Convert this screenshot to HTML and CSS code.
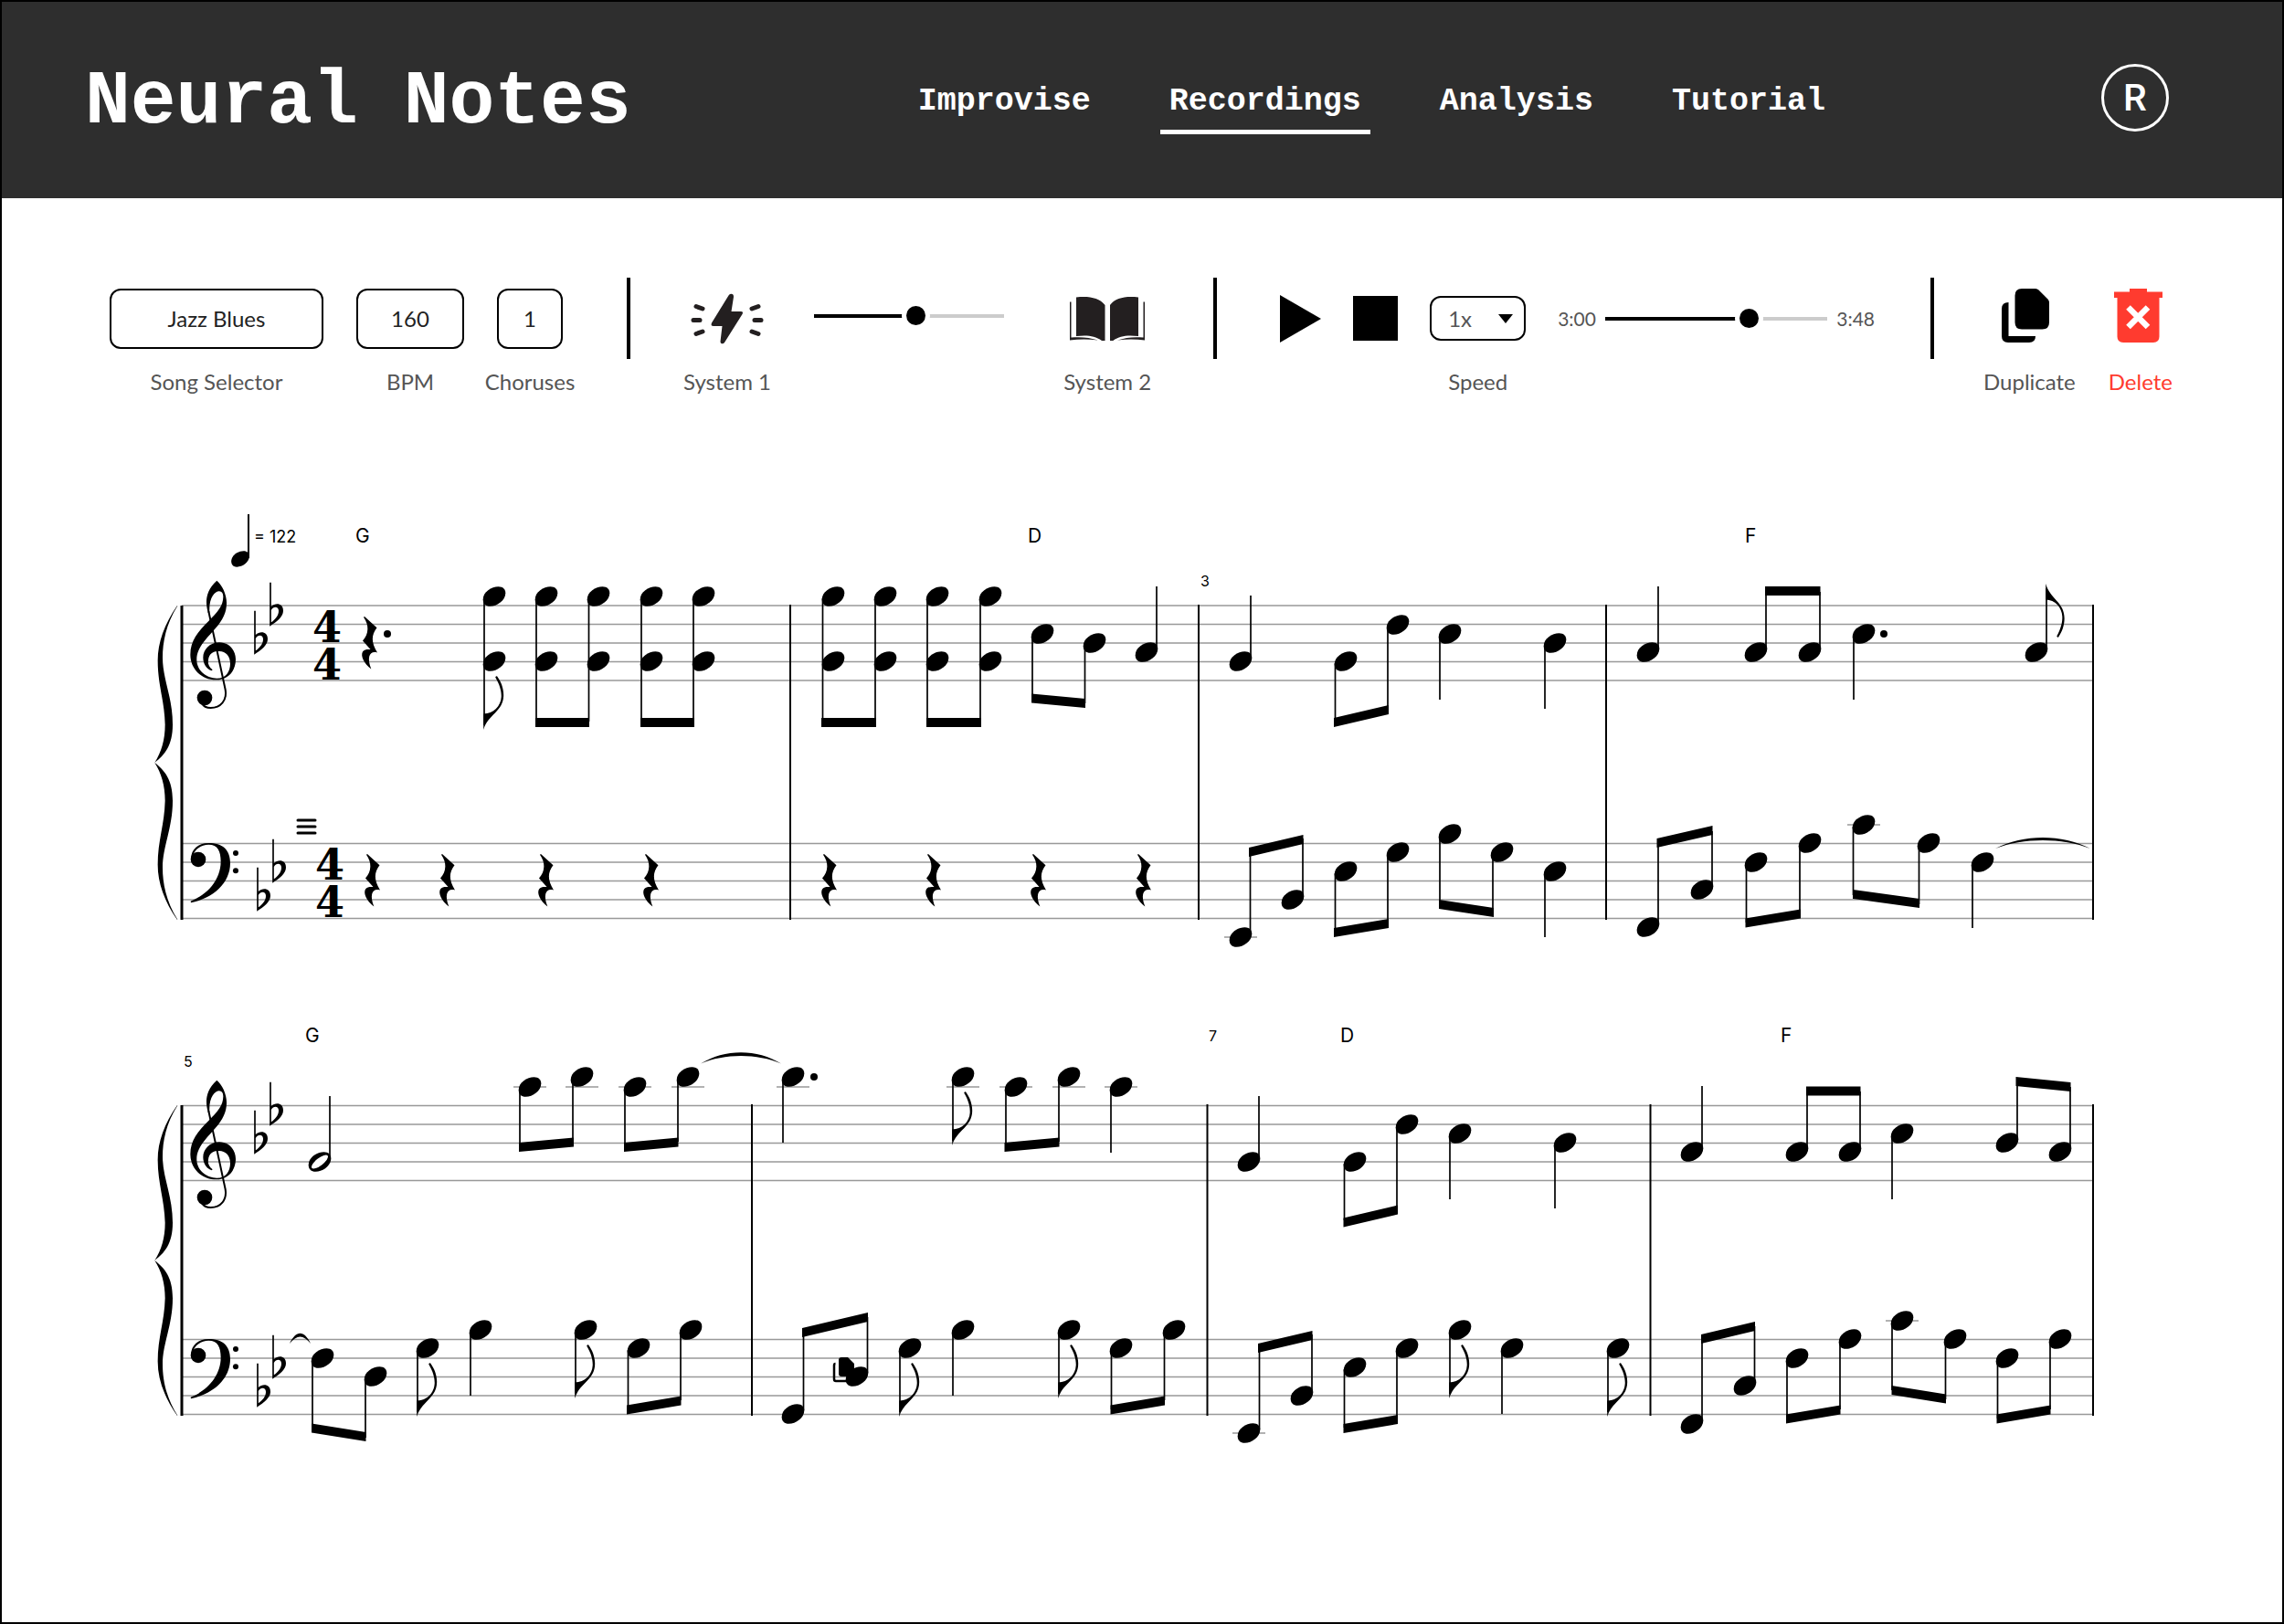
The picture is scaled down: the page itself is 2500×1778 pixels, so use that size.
FILE: index.html
```html
<!DOCTYPE html>
<html lang="en">
<head>
<meta charset="utf-8">
<meta name="viewport" content="width=device-width, initial-scale=1">
<title>Neural Notes</title>
<link rel="stylesheet" href="styles.css">
</head>
<body>
<div class="app">
  <header class="header">
    <h1 class="brand">Neural Notes</h1>
    <nav class="nav">
      <a class="nav-link" href="#improvise">Improvise</a>
      <a class="nav-link is-active" href="#recordings" aria-current="page">Recordings</a>
      <a class="nav-link" href="#analysis">Analysis</a>
      <a class="nav-link" href="#tutorial">Tutorial</a>
    </nav>
    <button class="avatar" type="button">R</button>
  </header>

  <main>
    <div class="toolbar">
      <div class="group group-song">
        <div class="item">
          <div class="control"><select class="box box-song" id="song"><option>Jazz Blues</option></select></div>
          <label class="label" for="song">Song Selector</label>
        </div>
        <div class="item">
          <div class="control"><input class="box box-bpm" id="bpm" type="text" value="160"></div>
          <label class="label" for="bpm">BPM</label>
        </div>
        <div class="item item-choruses">
          <div class="control"><input class="box box-choruses" id="choruses" type="text" value="1"></div>
          <label class="label" for="choruses">Choruses</label>
        </div>
      </div>

      <div class="divider"></div>

      <div class="group group-system">
        <button class="item" type="button">
          <span class="control">
            <svg width="80" height="56" viewBox="0 0 80 56" aria-hidden="true">
              <path d="M43 1q4-1 4 3L44.500 20H55q3 0 1.500 3L37 54q-1.500 2-3.500 1-1-.5-1-2L34.500 36H25q-3.500 0-2-3.500L41.500 2.500Q42 1.500 43 1Z" fill="#231f20"/>
              <path d="M6 14.500l7 2.500M3 29.500h7M6 44.500l7-2.500M74 14.500L67 17M77 29.500h-7M74 44.500L67 42" stroke="#231f20" stroke-width="5" stroke-linecap="round"/>
            </svg>
          </span>
          <span class="label">System 1</span>
        </button>
        <div class="control control-slider mix">
          <input class="slider" type="range" value="54" style="--value: 54%" aria-label="System balance">
        </div>
        <button class="item" type="button">
          <span class="control">
            <svg width="82" height="48" viewBox="0 0 82 48" aria-hidden="true">
              <path d="M7 .500C21-1 32 1 38.500 9v42.500C30 43 20 42 7 43.500ZM75 .500C61-1 50 1 44 9v42.500C52 43 62 42 75 43.500Z" fill="#231f20" transform="scale(1 .99)"/>
              <path d="M0 5.500h1.500V44.500C12 43.500 22 44.500 31 47.500 21 46 10 46 0 47.500ZM82 5.500h-1.500V44.500C70 43.500 61 44.500 52 47.500 62 46 72 46 82 47.500Z" fill="#231f20"/>
            </svg>
          </span>
          <span class="label">System 2</span>
        </button>
      </div>

      <div class="divider"></div>

      <div class="group group-player">
        <button class="control" type="button" aria-label="Play">
          <svg width="45" height="52" viewBox="0 0 45 52" aria-hidden="true"><path d="M0 0l45 26L0 52Z"/></svg>
        </button>
        <button class="control" type="button" aria-label="Stop">
          <svg width="49" height="49" viewBox="0 0 49 49" aria-hidden="true"><path d="M0 0h49v49H0Z"/></svg>
        </button>
        <div class="item">
          <div class="control speed">
            <select class="box box-speed" id="speed"><option>1x</option></select>
            <svg class="speed-arrow" width="16" height="10" viewBox="0 0 16 10" aria-hidden="true"><path d="M0 0h16L8 10Z"/></svg>
          </div>
          <label class="label" for="speed">Speed</label>
        </div>
        <div class="control control-slider progress">
          <span class="time">3:00</span>
          <input class="slider" type="range" value="66" style="--value: 66%" aria-label="Playback position">
          <span class="time">3:48</span>
        </div>
      </div>

      <div class="divider"></div>

      <div class="group group-actions">
        <button class="item" type="button">
          <span class="control">
            <svg width="60" height="59" viewBox="0 0 60 59" aria-hidden="true">
              <path d="M22 0H37q2 0 3.500 1.500L50.500 11.500Q52 13 52 15V37q0 7.500-7.500 7.500H22q-7.500 0-7.500-7.500V7.500Q14.500 0 22 0ZM7.500 15V52H37q0 7-7 7H7q-7 0-7-7V22q0-7 7.500-7Z"/>
            </svg>
          </span>
          <span class="label">Duplicate</span>
        </button>
        <button class="item item-danger" type="button">
          <span class="control">
            <svg width="58" height="59" viewBox="0 0 58 59" aria-hidden="true">
              <path d="M17 0H36V3.500H53V10H49.500V52.500q0 6.500-6.500 6.500H10q-6.500 0-6.500-6.500V10H0V3.500H17Z" fill="#ff3b2f"/>
              <path d="M15.500 20.500L37 42M37 20.500L15.500 42" stroke="#fff" stroke-width="6.500"/>
            </svg>
          </span>
          <span class="label">Delete</span>
        </button>
      </div>
    </div>

    <svg class="score" viewBox="0 500 2500 1120" role="img" aria-label="Sheet music, measures 1 to 8">
      <defs>
        <path id="head" d="M-12.300 3.200C-12.300-5-3-10.800 4.500-10.800 9.500-10.800 12.300-8 12.300-3.700 12.300 4.500 3 10.800-4.500 10.800-9.500 10.800-12.300 7.800-12.300 3.200Z"/>
        <path id="flag" d="M0 0C5-17 22-20 22-38 22-46 19-53 15-58.500Q14-59.500 13-57.500C18-49 19.800-42 19.500-36 19-26 11-17.500 0-17.500Z"/>
        <g id="down"><use href="#head"/><path class="stem" d="M-11 2V72"/></g>
        <g id="up"><use href="#head"/><path class="stem" d="M11-2V-72"/></g>
        <g id="down8"><use href="#head"/><path class="stem" d="M-11 2V70"/><use href="#flag" x="-11.800" y="75"/></g>
        <g id="up8"><use href="#head"/><path class="stem" d="M11-2V-70"/><use href="#flag" transform="translate(10.200 -75) scale(.93 -1)"/></g>
        <path id="rest" d="M3 0L16.500 12.300C10.500 20 10 28 17 39.500 9 37 5 44 10.300 57.500 2 51-1.500 43 1 38.500 3 35.500 7 35.800 9.500 36L1 26.500C8 19 8 9 2 .800Z"/>
        <g id="flat" transform="scale(.3333)"><path d="M-2.500 0Q0-3 2.500 0V78C18 64 42 68 42 92 42 112 20 128-2.500 143ZM2.500 90V130C16 120 27 108 27 92 27 78 10 76 2.500 90Z"/></g>
        <g id="treble" transform="scale(.3333)">
          <path d="M232 47C250 62 266 95 264 125 262 175 225 205 200 235 172 268 165 288 166 310 168 345 200 368 232 368 262 368 276 345 276 320 276 295 262 280 240 279 222 278 206 285 204 308 202 318 205 330 218 340L215 343C198 337 187 320 187 300 187 275 208 250 240 250 270 250 293 272 294 305 294 345 268 373 230 373 180 373 145 335 145 290 145 245 170 215 205 180 235 150 253 130 253 100 253 88 248 82 240 82 225 82 205 105 208 152L203 152C196 125 190 85 232 47Z"/>
          <path d="M205 148L260 405C266 440 245 465 212 465 198 465 188 460 183 450" fill="none" stroke="#000" stroke-width="6"/>
          <circle cx="192" cy="432" r="25"/>
        </g>
        <g id="bass" transform="scale(.3333)">
          <path d="M147 960C148 930 170 909 205 909 250 909 276 930 276 975 276 1040 220 1090 147 1105L146 1100C200 1080 245 1030 245 970 245 935 235 914 205 914 180 914 160 930 155 948Z"/>
          <circle cx="171" cy="963" r="25"/><circle cx="294" cy="942" r="9"/><circle cx="294" cy="1000" r="9"/>
        </g>
        <g id="half-brace"><path d="M102 129C60 190 38 250 38 310 38 390 60 440 62 520 62 570 50 610 28 645 60 620 87 590 87 520 87 430 54 370 54 300 54 250 65 190 103 130Z"/></g>
        <g id="brace"><use href="#half-brace"/><use href="#half-brace" transform="matrix(1 0 0 -1 0 1290)"/></g>
        <g id="staff"><path class="line" d="M199 0H2291M199 20.500H2291M199 41H2291M199 61.500H2291M199 82H2291"/></g>
        <path id="ledger" class="line" d="M-18 0H18"/>
        <circle id="dot" r="4"/>
      </defs>

      <!-- First system -->
      <use href="#staff" y="663"/>
      <use href="#staff" y="923.500"/>
      <path class="bar bar-first" d="M199 663V1007"/>
      <path class="bar" d="M865 662V1007M1312 662V1007M1758 662V1007M2291 662V1007"/>
      <use href="#brace" transform="translate(160 620) scale(.3333)"/>
      <use href="#treble" x="160" y="620"/>
      <use href="#bass" x="160" y="620"/>
      <use href="#flat" x="279" y="669"/><use href="#flat" x="296" y="638"/>
      <use href="#flat" x="282" y="950"/><use href="#flat" x="299" y="919"/>
      <g class="meter">
        <text x="358" y="703">4</text><text x="358" y="744">4</text>
        <text x="361" y="963">4</text><text x="361" y="1004">4</text>
      </g>
      <use href="#head" transform="translate(263 612) scale(.8)"/>
      <path class="tempo-stem" d="M272 563V611"/>
      <text class="tempo" x="278" y="594">= 122</text>
      <text class="chord" x="389" y="594">G</text>
      <text class="chord" x="1125" y="594">D</text>
      <text class="chord" x="1910" y="594">F</text>
      <text class="count" x="1314" y="642">3</text>
      <path class="tacet" d="M326 898H345M326 905H345M326 912H345"/>

      <!-- Measure 1 -->
      <use href="#rest" x="396" y="675"/><use href="#dot" x="424" y="694"/>
      <use href="#head" x="541" y="653"/><use href="#head" x="598" y="653"/><use href="#head" x="655" y="653"/><use href="#head" x="713" y="653"/><use href="#head" x="770" y="653"/>
      <use href="#down8" x="541" y="724"/><use href="#head" x="598" y="724"/><use href="#head" x="655" y="724"/><use href="#head" x="713" y="724"/><use href="#head" x="770" y="724"/>
      <path class="stem" d="M530 655V730M587 655V790M644.500 655V790M702 655V790M759 655V790"/>
      <path d="M586 786H645v10H586ZM701 786H760v10H701Z"/>
      <use href="#rest" x="399" y="935"/><use href="#rest" x="481" y="935"/><use href="#rest" x="589" y="935"/><use href="#rest" x="704" y="935"/>

      <!-- Measure 2 -->
      <use href="#head" x="912" y="653"/><use href="#head" x="969" y="653"/><use href="#head" x="1026" y="653"/><use href="#head" x="1084" y="653"/>
      <use href="#head" x="912" y="724"/><use href="#head" x="969" y="724"/><use href="#head" x="1026" y="724"/><use href="#head" x="1084" y="724"/>
      <use href="#head" x="1141" y="694"/><use href="#head" x="1198" y="704"/><use href="#up" x="1255" y="714"/>
      <path class="stem" d="M900.500 655V790M958 655V790M1015 655V790M1073 655V790M1130 696V765M1187.500 706V770"/>
      <path d="M899 786H959v10H899ZM1014 786H1074v10H1014ZM1129 759.500L1188 765v10L1129 769.500Z"/>
      <use href="#rest" x="899" y="935"/><use href="#rest" x="1013" y="935"/><use href="#rest" x="1128" y="935"/><use href="#rest" x="1243" y="935"/>

      <!-- Measure 3 -->
      <use href="#up" x="1358" y="724"/><use href="#head" x="1473" y="724"/><use href="#head" x="1530" y="684"/><use href="#down" x="1587" y="694"/><use href="#down" x="1702" y="704"/>
      <path class="stem" d="M1461.500 726V790M1519 685V780"/>
      <path d="M1460 786L1520 772v10L1460 796Z"/>
      <use href="#ledger" x="1358" y="1026"/>
      <use href="#head" x="1358" y="1026"/><use href="#head" x="1415" y="985"/><use href="#head" x="1473" y="954"/><use href="#head" x="1530" y="933"/><use href="#head" x="1587" y="913"/><use href="#head" x="1644" y="933"/><use href="#down" x="1702" y="954"/>
      <path class="stem" d="M1368.500 1022V935M1426 981V918M1461.500 956V1020M1519 935V1010M1576 915V990M1634 935V1000"/>
      <path d="M1367 928L1426.500 914v10L1367 938ZM1460 1016L1520 1006v10L1460 1026ZM1575 985L1635 994v10L1575 995Z"/>

      <!-- Measure 4 -->
      <use href="#up" x="1804" y="714"/><use href="#head" x="1922" y="714"/><use href="#head" x="1981" y="714"/><use href="#down" x="2040" y="694"/><use href="#dot" x="2062" y="694"/><use href="#up8" x="2229" y="714"/>
      <path class="stem" d="M1933 710V648M1992 710V648"/>
      <path d="M1932 642H1992.500v10H1932Z"/>
      <use href="#ledger" x="2040" y="903"/>
      <use href="#head" x="1804" y="1015"/><use href="#head" x="1863" y="974"/><use href="#head" x="1922" y="944"/><use href="#head" x="1981" y="923"/><use href="#head" x="2040" y="903"/><use href="#head" x="2111" y="923"/><use href="#down" x="2170" y="944"/>
      <path class="stem" d="M1815 1011V925M1874 970V910M1911.500 946V1010M1970 926V1000M2028.500 905V980M2100.500 925V990"/>
      <path d="M1813.500 918L1874.500 904v10L1813.500 928ZM1910.500 1005.500L1971 995.500v10L1910.500 1015.500ZM2028 974L2101 984v10L2028 984Z"/>
      <path d="M2184 929C2215 913 2257 913 2288 929 2257 917 2215 917 2184 929Z"/>

      <!-- Second system -->
      <use href="#staff" y="1210.500"/>
      <use href="#staff" y="1466.500"/>
      <path class="bar bar-first" d="M199 1210V1550"/>
      <path class="bar" d="M823 1209V1550M1321.500 1209V1550M1806.500 1209V1550M2291 1209V1550"/>
      <use href="#brace" transform="translate(160 1167.500) scale(.3333 .3295)"/>
      <use href="#treble" x="160" y="1167"/>
      <use href="#bass" x="160" y="1163"/>
      <use href="#flat" x="279" y="1216"/><use href="#flat" x="296" y="1185"/>
      <use href="#flat" x="282" y="1493"/><use href="#flat" x="299" y="1462"/>
      <text class="count" x="201" y="1168">5</text>
      <text class="chord" x="334" y="1141">G</text>
      <text class="count" x="1323" y="1140">7</text>
      <text class="chord" x="1467" y="1141">D</text>
      <text class="chord" x="1949" y="1141">F</text>

      <!-- Measure 5 -->
      <use href="#up" x="350" y="1272"/>
      <ellipse cx="350" cy="1272" rx="11" ry="4" fill="#fff" transform="rotate(-38 350 1272)"/>
      <use href="#ledger" x="580" y="1190"/><use href="#ledger" x="637" y="1190"/><use href="#ledger" x="695" y="1190"/><use href="#ledger" x="753" y="1190"/>
      <use href="#head" x="580" y="1190"/><use href="#head" x="637" y="1179"/><use href="#head" x="695" y="1190"/><use href="#head" x="753" y="1179"/>
      <path class="stem" d="M569 1192V1255M627 1181V1250M684 1192V1255M742 1181V1250"/>
      <path d="M568 1251L628 1245.500v10L568 1261ZM683 1251L742.500 1245.500v10L683 1261Z"/>
      <path d="M767 1164.500C793 1148 829 1148 855 1164.500 829 1153 793 1153 767 1164.500Z"/>
      <path d="M317 1471C324 1456 333 1456 340 1471 332 1461 325 1461 317 1471Z"/>
      <use href="#head" x="353" y="1487"/><use href="#head" x="411" y="1507"/><use href="#down8" x="468" y="1476"/><use href="#down" x="526" y="1456"/><use href="#down8" x="641" y="1456"/><use href="#head" x="699" y="1476"/><use href="#head" x="756" y="1456"/>
      <path class="stem" d="M342 1489V1565M400 1509V1574M687.500 1478V1543M745 1458V1533"/>
      <path d="M341 1558.500L400.500 1568v10L341 1568.500ZM686 1538.500L745.500 1528.500v10L686 1548.500Z"/>

      <!-- Measure 6 -->
      <use href="#ledger" x="868" y="1190"/><use href="#ledger" x="1054" y="1190"/><use href="#ledger" x="1112" y="1190"/><use href="#ledger" x="1170" y="1190"/><use href="#ledger" x="1227" y="1190"/>
      <use href="#down" x="868" y="1179"/><use href="#dot" x="891" y="1179"/><use href="#down8" x="1054" y="1179"/><use href="#head" x="1112" y="1190"/><use href="#head" x="1170" y="1179"/><use href="#down" x="1227" y="1190"/>
      <path class="stem" d="M1101 1192V1255M1159 1181V1250"/>
      <path d="M1099.500 1251L1159.500 1245.500v10L1099.500 1261Z"/>
      <use href="#head" x="868" y="1548"/><use href="#head" x="938" y="1507"/><use href="#down8" x="996" y="1476"/><use href="#down" x="1054" y="1456"/><use href="#down8" x="1170" y="1456"/><use href="#head" x="1227" y="1476"/><use href="#head" x="1285" y="1456"/>
      <path class="stem" d="M879.500 1544V1460M949.500 1503V1442M1216.500 1478V1543M1274.500 1458V1533"/>
      <path d="M878 1454L950 1437v10L878 1464ZM1215.500 1538.500L1275 1528.500v10L1215.500 1548.500Z"/>
      <path d="M921 1486H928L935 1493V1507H921Q918 1507 918 1504V1489Q918 1486 921 1486Z"/>
      <path d="M914.500 1493Q913 1493 913 1495V1510Q913 1512 915 1512H927" fill="none" stroke="#000" stroke-width="2.500"/>

      <!-- Measure 7 -->
      <use href="#up" x="1367" y="1272"/><use href="#head" x="1483" y="1272"/><use href="#head" x="1540" y="1231"/><use href="#down" x="1598" y="1241"/><use href="#down" x="1713" y="1251"/>
      <path class="stem" d="M1471.500 1274V1336M1529 1232V1325"/>
      <path d="M1470.500 1333.500L1530 1319.500v10L1470.500 1343.500Z"/>
      <use href="#ledger" x="1367" y="1569"/>
      <use href="#head" x="1367" y="1569"/><use href="#head" x="1425" y="1528"/><use href="#head" x="1483" y="1497"/><use href="#head" x="1540" y="1476"/><use href="#down8" x="1598" y="1456"/><use href="#down" x="1655" y="1476"/><use href="#down8" x="1771" y="1476"/>
      <path class="stem" d="M1378.500 1565V1478M1436 1523V1461M1471.500 1499V1563M1529 1478V1553"/>
      <path d="M1377 1471L1436.500 1457v10L1377 1481ZM1470.500 1559L1530 1549v10L1470.500 1569Z"/>

      <!-- Measure 8 -->
      <use href="#up" x="1852" y="1261"/><use href="#head" x="1967" y="1261"/><use href="#head" x="2025" y="1261"/><use href="#down" x="2082" y="1241"/><use href="#head" x="2197" y="1251"/><use href="#head" x="2255" y="1261"/>
      <path class="stem" d="M1978 1257V1195M2036 1257V1195M2208 1247V1185M2266 1257V1190"/>
      <path d="M1977 1189.500H2036.500v10H1977ZM2206.500 1179L2266.500 1185v10L2206.500 1189Z"/>
      <use href="#ledger" x="2082" y="1446"/>
      <use href="#head" x="1852" y="1559"/><use href="#head" x="1910" y="1517"/><use href="#head" x="1967" y="1487"/><use href="#head" x="2025" y="1466"/><use href="#head" x="2082" y="1446"/><use href="#head" x="2140" y="1466"/><use href="#head" x="2197" y="1487"/><use href="#head" x="2255" y="1466"/>
      <path class="stem" d="M1863 1555V1466M1920.500 1513V1452M1956 1489V1553M2014 1468V1543M2071 1448V1522M2129.500 1468V1532M2186.500 1489V1553M2244 1468V1543"/>
      <path d="M1862 1461L1921 1447v10L1862 1471ZM1955 1548.500L2014.500 1538.500v10L1955 1558.500ZM2070.500 1517L2130 1526.500v10L2070.500 1527ZM2185.500 1548.500L2244.500 1538.500v10L2185.500 1558.500Z"/>
    </svg>
  </main>
</div>
</body>
</html>
```
FILE: styles.css
```css
*,
*::before,
*::after {
  box-sizing: border-box;
}

body {
  margin: 0;
  background: #fff;
  color: #000;
  font-family: Lato, "Liberation Sans", sans-serif;
  font-size: 24px;
}

button {
  padding: 0;
  border: 0;
  background: none;
  color: inherit;
  font: inherit;
  cursor: pointer;
}

svg {
  display: block;
  flex: none;
}

.app {
  position: relative;
  min-height: 100vh;
}

/* Thin frame drawn over the whole page */
.app::after {
  content: "";
  position: absolute;
  inset: 0;
  border: 2px solid #000;
  pointer-events: none;
}

/* Header */
.header {
  display: flex;
  align-items: center;
  height: 217px;
  padding: 0 126px 4px 93px;
  background: #2e2e2e;
  color: #fff;
}

.brand {
  margin: 0 12px 0 0;
  padding-top: 10px;
  font: bold 83px/96px "Liberation Mono", monospace;
  white-space: nowrap;
}

.nav {
  display: flex;
  gap: 66px;
  margin: 0 auto;
}

.nav-link {
  padding: 24px 10px 10px;
  border-bottom: 5px solid transparent;
  color: inherit;
  font: bold 35px/42px "Liberation Mono", monospace;
  text-decoration: none;
}

.nav-link.is-active {
  border-bottom-color: #fff;
}

.avatar {
  width: 74px;
  height: 74px;
  border: 3px solid #fff;
  border-radius: 50%;
  font: 500 41px/48px Roboto, sans-serif;
}

/* Toolbar */
.toolbar {
  display: flex;
  align-items: flex-start;
  padding: 87px 122px 0 120px;
}

.divider {
  flex: none;
  width: 4px;
  height: 89px;
  background: #000;
}

.group {
  display: flex;
  flex: none;
}

.group-song {
  gap: 36px;
  padding-right: 70px;
}

.group-system {
  flex: 1 1 auto;
  padding: 0 68px 0 58px;
}

.group-player {
  flex: 1 1 auto;
  gap: 35px;
  padding: 0 61px 0 69px;
}

.group-actions {
  gap: 36px;
  padding-left: 54px;
}

.group-actions .control {
  padding-bottom: 6px;
}

.item {
  display: flex;
  flex: none;
  flex-direction: column;
  align-items: center;
}

.item-choruses {
  width: 72px;
}

.item-danger .label {
  color: #ff3b2f;
}

.control {
  display: flex;
  flex: none;
  align-items: center;
  height: 89px;
}

.label {
  margin-top: 11px;
  color: #555;
  font-size: 24px;
  line-height: 28px;
  white-space: nowrap;
}

.box {
  height: 66px;
  padding: 0;
  border: 2px solid #000;
  border-radius: 12px;
  background: #fff;
  color: #222;
  font: 24px/28px Lato, "Liberation Sans", sans-serif;
  text-align: center;
  text-align-last: center;
  appearance: none;
}

.box-song {
  width: 234px;
}

.box-bpm {
  width: 118px;
}

.box-choruses {
  width: 72px;
}

.box-speed {
  width: 105px;
  height: 49px;
  padding-left: 18px;
  color: #555;
  text-align: left;
  text-align-last: left;
}

.speed {
  position: relative;
}

.speed-arrow {
  position: absolute;
  right: 14px;
  pointer-events: none;
}

.control-slider {
  flex: 1 1 auto;
}

.mix {
  margin: 0 65px 0 47px;
  padding-bottom: 6px;
}

.progress {
  gap: 10px;
}

.time {
  color: #555;
  font-size: 21px;
  line-height: 28px;
}

.slider {
  flex: 1 1 auto;
  width: 208px;
  min-width: 0;
  height: 22px;
  margin: 0;
  background: linear-gradient(to right, #000 var(--value), #ccc var(--value)) center / 100% 4px no-repeat;
  appearance: none;
}

.progress .slider {
  width: 243px;
}

.slider::-webkit-slider-thumb {
  width: 21px;
  height: 21px;
  border-radius: 50%;
  background: #000;
  box-shadow: 0 0 0 5px #fff;
  appearance: none;
}

/* Score */
.score {
  width: 100%;
  height: auto;
  margin-top: 68px;
}

.line {
  fill: none;
  stroke: #999;
  stroke-width: 1.3px;
}

.stem {
  fill: none;
  stroke: #000;
  stroke-width: 1.7px;
}

.bar {
  fill: none;
  stroke: #000;
  stroke-width: 2px;
}

.bar-first {
  stroke-width: 3px;
}

.tempo-stem {
  fill: none;
  stroke: #000;
  stroke-width: 2px;
}

.tacet {
  fill: none;
  stroke: #000;
  stroke-width: 3px;
  stroke-linecap: round;
}

.meter {
  font: bold 46px "DejaVu Serif", serif;
  text-anchor: middle;
}

.tempo {
  font: 18px Inter, sans-serif;
}

.chord {
  font: 21px Inter, sans-serif;
}

.count {
  font: 16px Inter, sans-serif;
}
```
